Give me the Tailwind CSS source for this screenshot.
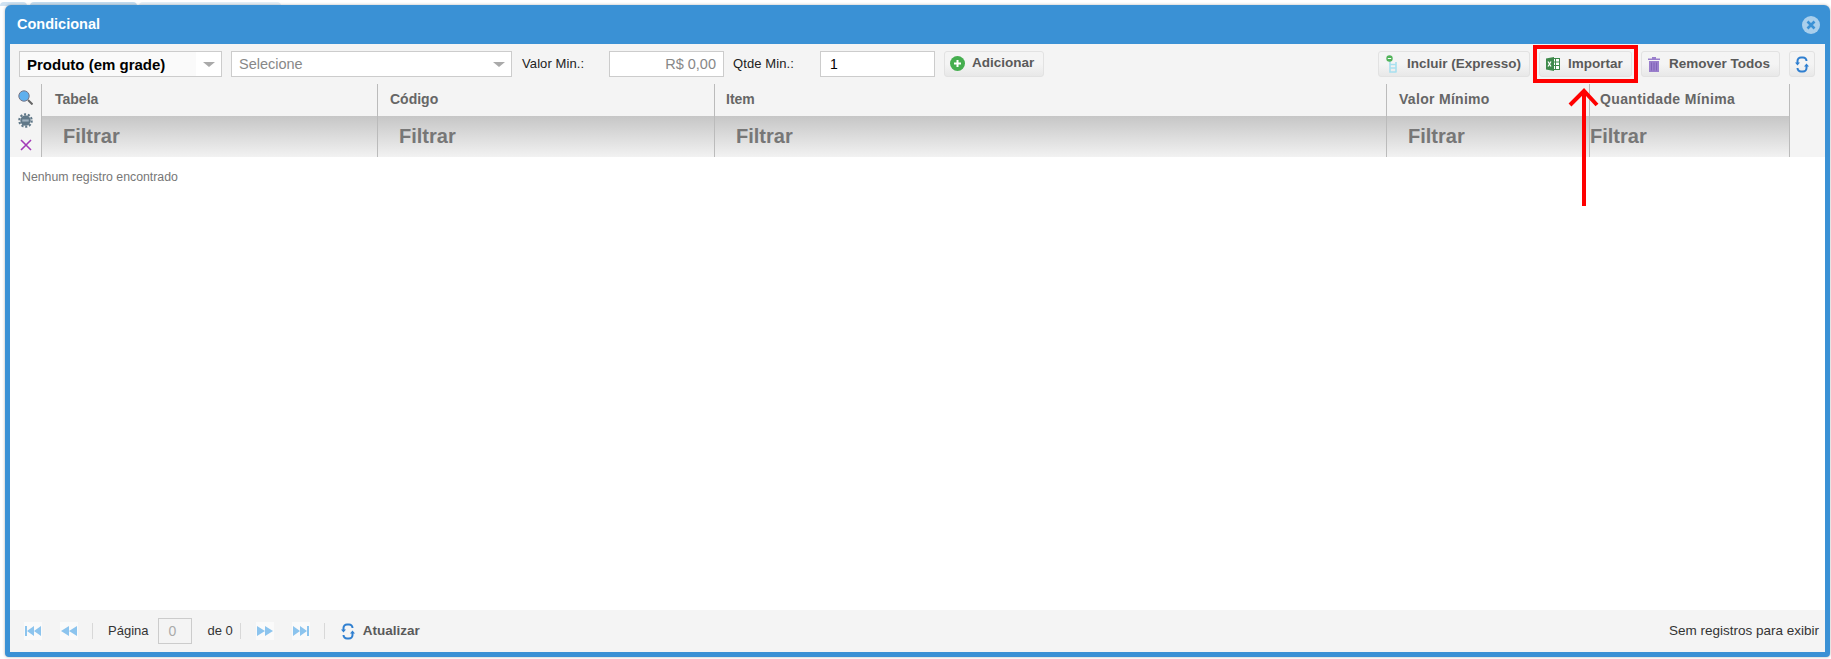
<!DOCTYPE html>
<html lang="pt">
<head>
<meta charset="utf-8">
<title>Condicional</title>
<script src="https://cdn.jsdelivr.net/npm/@tailwindcss/browser@4"></script>
</head>
<body class="bg-white font-['Liberation_Sans',Arial,sans-serif] overflow-hidden">
<div class="relative w-[1831px] h-[659px] pt-[5px] pl-[5px] pr-px overflow-hidden">
  <div class="absolute left-0 top-[2px] w-[27px] h-[4px] rounded-t bg-[#cfe2f2]"></div>
  <div class="absolute left-[30px] top-[2px] w-[107px] h-[4px] rounded-t bg-[#c5ddf0]"></div>
  <div class="absolute left-[139px] top-[2px] w-[142px] h-[4px] rounded-t bg-[#e6f0f8]"></div>

  <div class="relative flex flex-col h-[652px] bg-[#3a91d5] rounded-t-md rounded-b px-[5px] pb-[5px] shadow-[0_0_3px_rgba(0,0,0,0.3)]">
    <!-- title -->
    <div class="h-[39px] shrink-0 flex items-center justify-between pl-[7px] pr-[5px]">
      <span class="text-[14.5px] font-bold text-white">Condicional</span>
      <svg class="w-[18px] h-[18px]" viewBox="0 0 18 18"><circle cx="9" cy="9" r="9" fill="#a9cfec"/><path d="M5.5 5.5l7 7M12.5 5.5l-7 7" stroke="#3a91d5" stroke-width="2.6"/></svg>
    </div>
    <div class="flex-1 flex flex-col bg-white min-h-0">
      <!-- toolbar -->
      <div class="h-[40px] shrink-0 bg-[#f4f4f4] flex items-start pt-[7px] pl-[9px] pr-[10px] text-[13px] text-[#222]">
        <div class="w-[203px] h-[26px] border border-[#ccc] bg-white flex items-center">
          <span class="flex-1 h-full bg-[#fafafa] pl-[7px] font-bold text-[15px] leading-[25px] text-black">Produto (em grade)</span>
          <span class="w-[25px] h-full flex items-center justify-center"><span class="w-0 h-0 border-x-[6px] border-x-transparent border-t-[5px] border-t-[#aaa]"></span></span>
        </div>
        <div class="ml-[9px] w-[281px] h-[26px] border border-[#ccc] bg-white flex items-center pl-[7px] pr-[6px] justify-between">
          <span class="text-[14.5px] text-[#888] pt-px">Selecione</span>
          <span class="w-0 h-0 border-x-[6px] border-x-transparent border-t-[5px] border-t-[#aaa]"></span>
        </div>
        <span class="ml-[10px] w-[87px] leading-[25px] tracking-[0.1px]">Valor Min.:</span>
        <div class="w-[115px] h-[26px] border border-[#ccc] bg-white text-right pr-[7px] text-[14.5px] leading-[24px] text-[#888]">R$ 0,00</div>
        <span class="ml-[9px] w-[87px] leading-[25px] tracking-[0.1px]">Qtde Min.:</span>
        <div class="w-[115px] h-[26px] border border-[#ccc] bg-white pl-[9px] text-[14px] leading-[25px] text-black">1</div>
        <button class="ml-[9px] w-[100px] h-[26px] border border-[#e2e2e2] rounded-[3px] bg-linear-to-b from-[#f4f4f4] from-50% to-[#e8e8e8] flex items-center pl-[5px] pb-[1px] gap-[7px] text-[13.5px] font-bold text-[#5a5a5a]">
          <svg class="w-[15px] h-[15px] shrink-0" viewBox="0 0 15 15"><circle cx="7.5" cy="7.5" r="7.5" fill="#45ae4f"/><path d="M7.5 4v7M4 7.5h7" stroke="#fff" stroke-width="2"/></svg>
          Adicionar
        </button>
        <div class="flex-1"></div>
        <button class="w-[152px] h-[26px] border border-[#e2e2e2] rounded-[3px] bg-linear-to-b from-[#f4f4f4] from-50% to-[#e8e8e8] flex items-center pl-[7px] gap-[10px] text-[13.5px] font-bold text-[#5a5a5a]">
          <svg class="w-[11px] h-[18px] shrink-0" viewBox="0 0 11 18"><path d="M4 6v11h6.5M4 9.5h6.5M4 13h6.5M10 7v10" stroke="#a8e0ef" stroke-width="1.6" fill="none"/><circle cx="3.5" cy="3.5" r="3.2" fill="#52b35a"/><path d="M1.8 3.5h3.4" stroke="#fff"/></svg>
          Incluir (Expresso)
        </button>
        <button class="ml-[9px] w-[93px] h-[26px] border border-[#e2e2e2] rounded-[3px] bg-linear-to-b from-[#f4f4f4] from-50% to-[#e8e8e8] flex items-center pl-[6px] gap-[8px] text-[13.5px] font-bold text-[#5a5a5a]">
          <svg class="w-[14px] h-[14px] shrink-0" viewBox="0 0 14 14"><rect x="5.5" y="1.5" width="8" height="11" fill="#fff" stroke="#3f8a4c"/><path d="M9.5 1.5v11M5.5 5h8M5.5 8.5h8" stroke="#3f8a4c"/><path d="M0 1.5L8 0v14L0 12.5z" fill="#3f8a4c"/><path d="M2 4.5l3 5M5 4.5l-3 5" stroke="#fff" stroke-width="1.2"/></svg>
          Importar
        </button>
        <button class="ml-[9px] w-[139px] h-[26px] border border-[#e2e2e2] rounded-[3px] bg-linear-to-b from-[#f4f4f4] from-50% to-[#e8e8e8] flex items-center pl-[6px] gap-[9px] text-[13.5px] font-bold text-[#5a5a5a]">
          <svg class="w-[12px] h-[15px] shrink-0" viewBox="0 0 12 15"><path d="M4 0h4v1.5h4V3H0V1.5h4z" fill="#9a7fcc"/><path d="M1 4h10v11H1z" fill="#9a7fcc"/><path d="M3.5 5.5v8M6 5.5v8M8.5 5.5v8" stroke="#8063b8"/></svg>
          Remover Todos
        </button>
        <button class="ml-[9px] w-[26px] h-[26px] border border-[#e2e2e2] rounded-[3px] bg-linear-to-b from-[#f4f4f4] from-50% to-[#e8e8e8] flex items-center justify-center">
          <svg class="w-[14px] h-[17px]" viewBox="0 0 14 17" fill="none" stroke="#2f7fd0" stroke-width="2"><path d="M2.5 7V5A3.5 3.5 0 0 1 6 1.5h2A3.5 3.5 0 0 1 11.5 5"/><path d="M11.5 10v2a3.5 3.5 0 0 1-3.5 3.5H6A3.5 3.5 0 0 1 2.5 12"/><path d="M0 6.5l2.5 3 2.5-3M9 10.5l2.5-3 2.5 3" fill="#2f7fd0" stroke="none"/></svg>
        </button>
      </div>
      <!-- grid header -->
      <div class="shrink-0 h-[73px] flex bg-[#f4f4f4]">
        <div class="w-[31px] shrink-0 flex flex-col items-center pt-[6px]">
          <svg class="w-[15px] h-[15px]" viewBox="0 0 15 15"><circle cx="6" cy="6" r="5.2" fill="#5fb0ee" stroke="#778" stroke-width="1"/><path d="M10 10l4.5 4.5" stroke="#666" stroke-width="2"/></svg>
          <svg class="w-[15px] h-[15px] mt-[8px]" viewBox="0 0 14 14"><circle cx="7" cy="7" r="4.8" fill="#607888"/><circle cx="7" cy="7" r="5.8" fill="none" stroke="#607888" stroke-width="2" stroke-dasharray="2 1.6"/><rect x="4" y="6" width="6" height="2" fill="#9fb1bf"/></svg>
          <svg class="w-[12px] h-[12px] mt-[11px]" viewBox="0 0 12 12"><path d="M1 1l10 10M11 1L1 11" stroke="#a23ab8" stroke-width="1.6"/></svg>
        </div>
        <div class="flex-1 grid grid-cols-[336px_337px_672px_203px_200px_1fr] grid-rows-[32px_41px]">
          <div class="border-l border-[#bbb] pl-[13px] text-[14px] font-bold text-[#666] leading-[31px]">Tabela</div>
          <div class="border-l border-[#bbb] pl-[12px] text-[14px] font-bold text-[#666] leading-[31px]">Código</div>
          <div class="border-l border-[#bbb] pl-[11px] text-[14px] font-bold text-[#666] leading-[31px]">Item</div>
          <div class="border-l border-[#bbb] pl-[12px] text-[14px] font-bold text-[#666] leading-[31px] tracking-[0.3px]">Valor Mínimo</div>
          <div class="border-l border-[#bbb] pl-[10px] text-[14px] font-bold text-[#666] leading-[31px] tracking-[0.35px]">Quantidade Mínima</div>
          <div class="border-l border-[#bbb]"></div>
          <div class="border-l border-[#bbb] bg-linear-to-b from-[#c6c6c6] to-[#f2f2f2] pl-[21px] text-[20px] font-bold text-[#777] leading-[41px]">Filtrar</div>
          <div class="border-l border-[#bbb] bg-linear-to-b from-[#c6c6c6] to-[#f2f2f2] pl-[21px] text-[20px] font-bold text-[#777] leading-[41px]">Filtrar</div>
          <div class="border-l border-[#bbb] bg-linear-to-b from-[#c6c6c6] to-[#f2f2f2] pl-[21px] text-[20px] font-bold text-[#777] leading-[41px]">Filtrar</div>
          <div class="border-l border-[#bbb] bg-linear-to-b from-[#c6c6c6] to-[#f2f2f2] pl-[21px] text-[20px] font-bold text-[#777] leading-[41px]">Filtrar</div>
          <div class="border-l border-[#bbb] bg-linear-to-b from-[#c6c6c6] to-[#f2f2f2] pl-0 text-[20px] font-bold text-[#777] leading-[41px]">Filtrar</div>
          <div class="border-l border-[#bbb]"></div>
        </div>
      </div>
      <div class="flex-1 pl-[12px] pt-[11px] text-[12.3px] text-[#777] bg-white">Nenhum registro encontrado</div>
      <!-- footer -->
      <div class="h-[42px] shrink-0 bg-[#f4f4f4] flex items-center pl-[14px] pr-[6px] text-[13px] text-[#333]">
        <svg class="w-[18px] h-[18px] shrink-0" viewBox="0 0 18 18"><rect width="18" height="18" fill="#fafafa"/><path d="M1 4h2v10H1zM10 4v10L3 9zM17 4v10l-7-5z" fill="#8cc4ee"/></svg>
        <svg class="w-[18px] h-[18px] shrink-0 ml-[18px]" viewBox="0 0 18 18"><rect width="18" height="18" fill="#fafafa"/><path d="M9 4v10L1 9zM17 4v10L9 9z" fill="#8cc4ee"/></svg>
        <span class="w-px h-[16px] bg-[#d8d8d8] ml-[14px]"></span>
        <span class="ml-[15px]">Página</span>
        <span class="ml-[10px] w-[34px] h-[26px] border border-[#ccc] pl-[9px] text-[14px] leading-[24px] text-[#aaa]">0</span>
        <span class="ml-[15px]">de 0</span>
        <span class="w-px h-[16px] bg-[#d8d8d8] ml-[7px]"></span>
        <svg class="w-[18px] h-[18px] shrink-0 ml-[15px]" viewBox="0 0 18 18"><rect width="18" height="18" fill="#fafafa"/><path d="M1 4v10l8-5zM9 4v10l8-5z" fill="#8cc4ee"/></svg>
        <svg class="w-[18px] h-[18px] shrink-0 ml-[18px]" viewBox="0 0 18 18"><rect width="18" height="18" fill="#fafafa"/><path d="M1 4v10l7-5zM8 4v10l7-5zM15 4h2v10h-2z" fill="#8cc4ee"/></svg>
        <span class="w-px h-[16px] bg-[#d8d8d8] ml-[14px]"></span>
        <svg class="w-[14px] h-[17px] shrink-0 ml-[16px]" viewBox="0 0 14 17" fill="none" stroke="#2f7fd0" stroke-width="2"><path d="M2.5 7V5A3.5 3.5 0 0 1 6 1.5h2A3.5 3.5 0 0 1 11.5 5"/><path d="M11.5 10v2a3.5 3.5 0 0 1-3.5 3.5H6A3.5 3.5 0 0 1 2.5 12"/><path d="M0 6.5l2.5 3 2.5-3M9 10.5l2.5-3 2.5 3" fill="#2f7fd0" stroke="none"/></svg>
        <span class="ml-[8px] font-bold text-[13.5px] text-[#5a5a5a]">Atualizar</span>
        <span class="ml-auto text-[13.5px]">Sem registros para exibir</span>
      </div>
    </div>
  </div>
  <!-- annotation -->
  <div class="absolute left-[1533px] top-[45px] w-[105px] h-[38px] border-4 border-[#f00]"></div>
  <svg class="absolute left-[1565px] top-[86px] w-[36px] h-[122px]" viewBox="0 0 36 122" fill="none" stroke="#f00" stroke-width="4"><path d="M19 4v116M5 19L19 5l13 14"/></svg>
</div>
</body>
</html>
